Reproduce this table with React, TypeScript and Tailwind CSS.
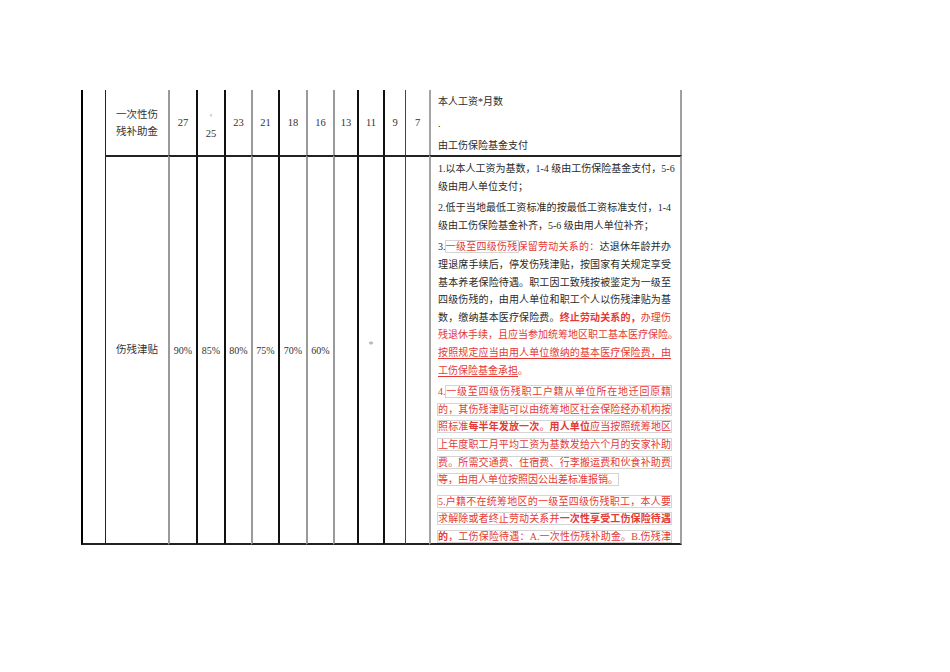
import React from "react";

const RED = "text-[#e53935]";

const colBorders = [
  "border-l-2 border-l-black",
  "border-l border-l-[#222]",
  "border-l-2 border-l-[#9a9a9a]",
  "border-l-2 border-l-[#111]",
  "border-l-2 border-l-[#111]",
  "border-l-2 border-l-[#9a9a9a]",
  "border-l-2 border-l-[#111]",
  "border-l-2 border-l-[#9a9a9a]",
  "border-l-2 border-l-[#9a9a9a]",
  "border-l-2 border-l-[#111]",
  "border-l-2 border-l-[#111]",
  "border-l border-l-[#444]",
  "border-l-2 border-l-[#a5a5a5] border-r-2 border-r-[#a0a0a0]",
];

const Line = ({
  children,
  full,
}: {
  children: React.ReactNode;
  full?: boolean;
}) => (
  <div
    className={
      full
        ? "whitespace-nowrap text-justify [text-align-last:justify]"
        : "whitespace-nowrap"
    }
  >
    {children}
  </div>
);

const Box = ({ children }: { children: React.ReactNode }) => (
  <span className="outline outline-[#d4d4d4]">{children}</span>
);

const Hot = ({ children }: { children: React.ReactNode }) => (
  <span className="font-bold underline decoration-[#e53935] underline-offset-2">
    {children}
  </span>
);

const AllowanceNotes = () => (
  <div className="h-full overflow-hidden pt-[3px] pl-[7px] pr-[9px] text-[10px] leading-[17.6px] text-[#2a2a2a] flex flex-col gap-[4px]">
    <div>
      <Line full>1.以本人工资为基数，1-4 级由工伤保险基金支付，5-6</Line>
      <Line>级由用人单位支付；</Line>
    </div>
    <div>
      <Line full>2.低于当地最低工资标准的按最低工资标准支付，1-4</Line>
      <Line>级由工伤保险基金补齐，5-6 级由用人单位补齐；</Line>
    </div>
    <div>
      <Line full>
        3.
        <span className={RED}>
          <Box>
            <span className="underline decoration-[#e53935] underline-offset-2">
              一级至四级伤残
            </span>
          </Box>
          保留劳动关系的：
        </span>
        达退休年龄并办
      </Line>
      <Line full>理退席手续后，停发伤残津贴，按国家有关规定享受</Line>
      <Line full>基本养老保险待遇。职工因工致残按被鉴定为一级至</Line>
      <Line full>四级伤残的，由用人单位和职工个人以伤残津贴为基</Line>
      <Line full>
        数，缴纳基本医疗保险费。
        <span className={`${RED} font-bold`}>终止劳动关系的，</span>
        <span className={RED}>办理伤</span>
      </Line>
      <Line full>
        <span className={RED}>残退休手续，且应当参加统筹地区职工基本医疗保险。</span>
      </Line>
      <Line full>
        <span className={`${RED} underline decoration-[#e53935] underline-offset-2`}>
          按照规定应当由用人单位缴纳的基本医疗保险费，由
        </span>
      </Line>
      <Line>
        <span className={RED}>
          <span className="underline decoration-[#e53935] underline-offset-2">
            工伤保险基金承担
          </span>
          。
        </span>
      </Line>
    </div>
    <div className={RED}>
      <Line full>
        4.
        <Box>
          <span className="underline decoration-[#e53935] underline-offset-2">
            一级至四级伤残职工户籍从单位所在地迁回原籍
          </span>
        </Box>
      </Line>
      <Line full>
        <Box>的，其伤残津贴可以由统筹地区社会保险经办机构按</Box>
      </Line>
      <Line full>
        <Box>
          照标准<Hot>每半年发放一次</Hot>。<Hot>用人单位</Hot>应当按照统筹地区
        </Box>
      </Line>
      <Line full>
        <Box>上年度职工月平均工资为基数发给六个月的安家补助</Box>
      </Line>
      <Line full>
        <Box>费。所需交通费、住宿费、行李搬运费和伙食补助费</Box>
      </Line>
      <Line>
        <Box>等，由用人单位按照因公出差标准报销。</Box>
      </Line>
    </div>
    <div className={RED}>
      <Line full>
        <Box>5.户籍不在统筹地区的一级至四级伤残职工，本人要</Box>
      </Line>
      <Line full>
        <Box>
          求解除或者终止劳动关系并<Hot>一次性享受工伤保险待遇</Hot>
        </Box>
      </Line>
      <Line full>
        <Box>
          <Hot>的</Hot>，工伤保险待遇：A.一次性伤残补助金。B.伤残津
        </Box>
      </Line>
    </div>
  </div>
);

export default function App() {
  const row1Nums = ["23", "21", "18", "16", "13", "11", "9", "7"];
  const row2Nums = ["90%", "85%", "80%", "75%", "70%", "60%"];
  const top = "border-t-2 border-t-[#222] border-b-2 border-b-[#222]";

  return (
    <div className="w-[950px] h-[672px] overflow-hidden bg-white pt-[90px] pl-[81px] font-['Liberation_Serif','Noto_Sans_CJK_SC',serif]">
      <div className="grid grid-cols-[24px_63px_28px_28px_27px_27px_28px_27px_24px_26px_22px_24px_253px] grid-rows-[65px_390px]">
        {/* row 1 */}
        <div className={`row-span-2 ${colBorders[0]} border-b-2 border-b-[#222]`} />
        <div className={`${colBorders[1]} flex flex-col items-center justify-center text-[10.5px] leading-[17px] text-[#333] pt-[1px]`}>
          <span>一次性伤</span>
          <span>残补助金</span>
        </div>
        <div className={`${colBorders[2]} flex items-center justify-center text-[10.5px] text-[#333]`}>
          27
        </div>
        <div className={`${colBorders[3]} flex flex-col items-center justify-center text-[10.5px] leading-[19px] text-[#333] pt-[2px]`}>
          <span className="text-[9px] text-[#999]">‹</span>
          <span>25</span>
        </div>
        {row1Nums.map((n, i) => (
          <div key={n} className={`${colBorders[4 + i]} flex items-center justify-center text-[10.5px] text-[#333]`}>
            {n}
          </div>
        ))}
        <div className={`${colBorders[12]} flex flex-col justify-center pl-[7px] pt-[3px] text-[10px] leading-[22px] text-[#2a2a2a]`}>
          <span>本人工资*月数</span>
          <span>.</span>
          <span>由工伤保险基金支付</span>
        </div>

        {/* row 2 */}
        <div className={`${colBorders[1]} ${top} flex items-center justify-center text-[10.5px] text-[#333]`}>
          伤残津贴
        </div>
        {row2Nums.map((n, i) => (
          <div key={n} className={`${colBorders[2 + i]} ${top} flex items-center justify-center text-[10px] text-[#333]`}>
            {n}
          </div>
        ))}
        <div className={`${colBorders[8]} ${top}`} />
        <div className={`${colBorders[9]} ${top} flex items-center justify-center pb-[12px] text-[10px] text-[#999]`}>
          *
        </div>
        <div className={`${colBorders[10]} ${top}`} />
        <div className={`${colBorders[11]} ${top}`} />
        <div className={`${colBorders[12]} ${top} overflow-hidden`}>
          <AllowanceNotes />
        </div>
      </div>
    </div>
  );
}
